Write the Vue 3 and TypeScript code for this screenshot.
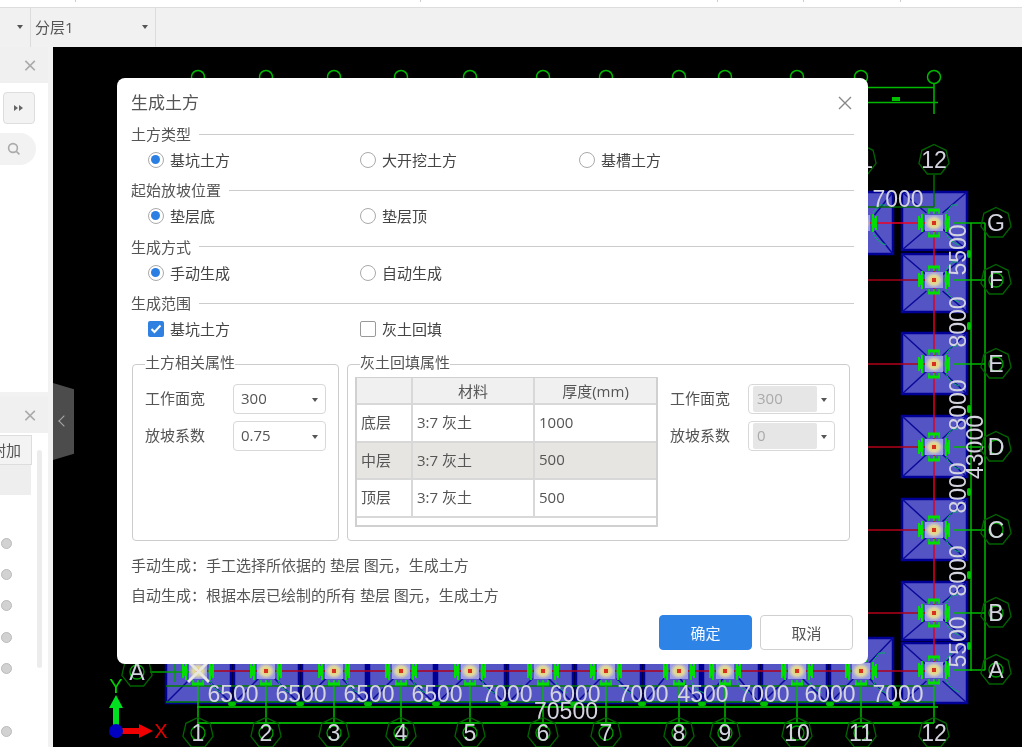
<template>
  <div class="app">
    <div class="top-strip">
      <i v-for="x in stripTicks" :key="x" class="strip-tick" :style="{ left: x + 'px' }"></i>
    </div>
    <div class="toolbar">
      <div class="tool-cell first"><i class="caret"></i></div>
      <div class="tool-cell floor"><span>分层1</span><i class="caret"></i></div>
    </div>

    <div class="main">
      <aside class="side">
        <section class="panel upper">
          <header class="panel-head"><span class="panel-x">×</span></header>
          <div class="panel-body">
            <button class="more-btn">
              <svg width="10" height="8" viewBox="0 0 10 8"><path d="M0 1l4 3-4 3zM5 1l4 3-4 3z" fill="#666" /></svg>
            </button>
            <div class="search">
              <svg width="14" height="14" viewBox="0 0 14 14" fill="none" stroke="#aaa" stroke-width="1.6"><circle cx="6" cy="6" r="4.4" /><path d="M9.4 9.4l3 3" /></svg>
            </div>
          </div>
        </section>
        <section class="panel lower">
          <header class="panel-head"><span class="panel-x">×</span></header>
          <div class="tab"><span>附加</span></div>
          <div class="lower-body">
            <div class="dots">
              <div class="gray-row"></div>
              <i v-for="(d, i) in dots" :key="i" class="dot" :style="{ marginTop: d + 'px' }"></i>
            </div>
            <div class="scroll"></div>
          </div>
        </section>
      </aside>

      <div class="canvas">
        <svg class="drawing" viewBox="53 47 969 700" width="969" height="700">
          <defs>
            <radialGradient id="core">
              <stop offset="0" stop-color="#e8d050" />
              <stop offset="0.55" stop-color="#e0d8a0" />
              <stop offset="1" stop-color="#9c9ce4" />
            </radialGradient>
            <g id="pile">
              <path d="M-15 -7v14M-12 -9v18M12 -9v18M15 -7v14" stroke="#00e000" stroke-width="2" />
              <ellipse cx="-13" cy="0" rx="2.5" ry="5" fill="#00e000" />
              <ellipse cx="13" cy="0" rx="2.5" ry="5" fill="#00e000" />
              <path d="M-6 -13h12M-6 13h12" stroke="#00e000" stroke-width="3" />
              <path d="M-5 -14v5M0 -14v5M5 -14v5M-5 9v5M0 9v5M5 9v5" stroke="#00e000" stroke-width="1.5" />
              <rect x="-9" y="-8" width="18" height="16" fill="url(#core)" />
              <rect x="-2" y="-2" width="4" height="4" fill="#d83020" />
              <path d="M12 -10l6 -8h6M12 10q4 9 13 12" fill="none" stroke="#00b060" stroke-width="1" />
            </g>
          </defs>

          <!-- 基坑 -->
          <g v-for="(b, i) in blocks" :key="'b' + i">
            <rect :x="b.x" :y="b.y" :width="b.w" :height="b.h" fill="#5454c4" stroke="#000096" stroke-width="2.5" />
            <path :d="diagonals(b)" stroke="#0a0a9a" stroke-width="1.5" fill="none" />
          </g>

          <!-- 軸線 -->
          <g stroke="#b00018" stroke-width="1.5">
            <line x1="198" y1="671" x2="934" y2="671" />
            <line x1="860" y1="223" x2="934" y2="223" stroke="#f00020" />
            <line x1="860" y1="280" x2="934" y2="280" stroke="#a00018" />
            <line x1="860" y1="364" x2="934" y2="364" />
            <line x1="860" y1="447" x2="934" y2="447" />
            <line x1="860" y1="530" x2="934" y2="530" />
            <line x1="860" y1="613" x2="934" y2="613" />
            <line x1="934" y1="223" x2="934" y2="670" stroke="#e00020" />
          </g>

          <g fill="none" stroke="#00b800" stroke-width="1.5">
            <circle v-for="x in colX" :key="'t' + x" :cx="x" cy="77" r="6.5" />
            <path d="M934 84V114M860 87.500H934M860 102.500H938" />
            <path d="M934 175V207" stroke="#007000" />
            <path d="M860 207H934" stroke="#007000" />
            <path d="M971 223V671M985 223V670" />
            <path v-for="y in rowY" :key="'r' + y" :d="`M954 ${y}H985`" />
            <path d="M166 686H934M166 702H934" stroke="#008000" />
            <path d="M197 707H938M197 723H934" stroke="#00e000" />
            <path v-for="x in colX" :key="'v' + x" :d="`M${x} 686V723`" />
            <path d="M150 672H200M175 664V682" stroke="#00a000" />
          </g>
          <rect x="892" y="97" width="8" height="4" fill="#00c000" />

          <use v-for="(p, i) in piles" :key="'p' + i" href="#pile" :x="p.x" :y="p.y" />
          <path d="M188 661L209 682M209 661L188 682" stroke="#e8e8e0" stroke-width="3" />

          <g fill="#00c000">
            <rect v-for="x in tickX" :key="'k' + x" :x="x" y="702" width="8" height="4" rx="2" />
            <rect v-for="y in [250, 322, 405, 488, 571, 642]" :key="'q' + y" x="967" :y="y" width="4" height="8" rx="2" />
          </g>

          <!-- 寸法 -->
          <g class="dim">
            <text v-for="d in bottomDims" :key="'d' + d.x" :x="d.x" y="702" text-anchor="middle">{{ d.t }}</text>
            <text x="566" y="719" text-anchor="middle">70500</text>
            <text x="898" y="207" text-anchor="middle">7000</text>
            <text v-for="d in sideDims" :key="'s' + d.y" :x="d.x" :y="d.y" text-anchor="middle" dominant-baseline="central" :transform="`rotate(-90 ${d.x} ${d.y})`">{{ d.t }}</text>
          </g>

          <!-- 軸号 -->
          <g v-for="l in labels" :key="l.t + l.x" class="dim">
            <polygon :points="hept(l.x, l.y)" fill="none" stroke="#006400" stroke-width="1.3" />
            <circle v-if="l.inner" :cx="l.x" :cy="l.y" r="7" fill="none" stroke="#00a000" stroke-width="1.3" />
            <text :x="l.x" :y="l.y + 8" text-anchor="middle">{{ l.t }}</text>
          </g>

          <!-- 座標軸 -->
          <path d="M113 731V708H109L116 695L123 708H119V731z" fill="#00e020" />
          <path d="M116 728H139V724L153 731L139 738V734H116z" fill="#f00000" />
          <circle cx="116" cy="731" r="7" fill="#0000c0" />
          <text x="116" y="693" class="axis" fill="#00d000" text-anchor="middle">Y</text>
          <text x="161" y="738" class="axis" fill="#e00000" text-anchor="middle">X</text>
        </svg>

        <div class="handle"><span></span></div>
      </div>
    </div>

    <div class="dialog">
      <div class="dialog-head">
        <span>生成土方</span>
        <svg class="close" width="14" height="14" viewBox="0 0 14 14" stroke="#888" stroke-width="1.4"><path d="M1 1l12 12M13 1L1 13" /></svg>
      </div>

      <div v-for="s in sections" :key="s.title" class="section">
        <div class="section-title"><span>{{ s.title }}</span><i></i></div>
        <div class="choices">
          <label v-for="o in s.options" :key="o.text" class="choice">
            <i :class="[s.check ? 'check' : 'radio', { on: o.on }]">
              <svg v-if="s.check && o.on" width="16" height="16" viewBox="0 0 16 16" fill="none" stroke="#fff" stroke-width="2"><path d="M3.500 8l3 3 6-6.500" /></svg>
            </i>
            <span>{{ o.text }}</span>
          </label>
        </div>
      </div>

      <div class="groups">
        <div class="group left">
          <span class="legend">土方相关属性</span>
          <div class="field"><label>工作面宽</label><div class="select"><span>300</span><i class="caret"></i></div></div>
          <div class="field"><label>放坡系数</label><div class="select"><span>0.75</span><i class="caret"></i></div></div>
        </div>
        <div class="group right">
          <span class="legend">灰土回填属性</span>
          <div class="table-wrap">
            <table>
              <thead>
                <tr><th></th><th>材料</th><th>厚度(mm)</th></tr>
              </thead>
              <tbody>
                <tr v-for="(r, i) in layers" :key="r.name" :class="{ picked: i === 1 }">
                  <td>{{ r.name }}</td><td>{{ r.material }}</td><td>{{ r.thick }}</td>
                </tr>
              </tbody>
            </table>
          </div>
          <div class="right-fields">
            <div class="field"><label>工作面宽</label><div class="select off"><span>300</span><i class="caret"></i></div></div>
            <div class="field"><label>放坡系数</label><div class="select off"><span>0</span><i class="caret"></i></div></div>
          </div>
        </div>
      </div>

      <p class="notes">手动生成：手工选择所依据的 垫层 图元，生成土方</p>
      <p class="notes">自动生成：根据本层已绘制的所有 垫层 图元，生成土方</p>

      <div class="actions">
        <button class="btn primary">确定</button>
        <button class="btn">取消</button>
      </div>
    </div>
  </div>
</template>

<script setup lang="ts">
interface Block { x: number; y: number; w: number; h: number }

const stripTicks = [75, 420, 717, 803, 900];
const colX = [198, 266, 334, 401, 470, 543, 606, 679, 725, 797, 861, 934];
const rowY = [223, 280, 364, 447, 530, 613, 670];

const dots = [73, 20, 20, 21, 20, 52];

// 下段の基坑は軸の中間で区切る
const bottomEdges = [166, 234, 302, 369, 437, 508, 576, 644, 703, 762, 830, 896];
const blocks: Block[] = [
  { x: 902, y: 192, w: 65, h: 58 },
  { x: 902, y: 254, w: 65, h: 58 },
  { x: 902, y: 333, w: 65, h: 61 },
  { x: 902, y: 416, w: 65, h: 61 },
  { x: 902, y: 499, w: 65, h: 61 },
  { x: 902, y: 582, w: 65, h: 58 },
  { x: 902, y: 643, w: 65, h: 60 },
  { x: 840, y: 192, w: 53, h: 62 },
  ...bottomEdges.slice(0, -1).map((x, i) => ({
    x,
    y: 638,
    w: bottomEdges[i + 1] - x - 3,
    h: 65,
  })),
];

const piles = [
  ...rowY.map((y) => ({ x: 934, y })),
  ...colX.slice(0, -1).map((x) => ({ x, y: 671 })),
  { x: 861, y: 223 },
];

const tickX = [228, 296, 364, 432, 500, 570, 638, 698, 760, 826, 892];

const bottomDims = [
  { x: 233, t: "6500" },
  { x: 301, t: "6500" },
  { x: 369, t: "6500" },
  { x: 437, t: "6500" },
  { x: 507, t: "7000" },
  { x: 575, t: "6000" },
  { x: 643, t: "7000" },
  { x: 703, t: "4500" },
  { x: 764, t: "7000" },
  { x: 830, t: "6000" },
  { x: 898, t: "7000" },
];

const sideDims = [
  { x: 958, y: 250, t: "5500" },
  { x: 958, y: 322, t: "8000" },
  { x: 958, y: 405, t: "8000" },
  { x: 958, y: 488, t: "8000" },
  { x: 958, y: 571, t: "8000" },
  { x: 958, y: 642, t: "5500" },
  { x: 975, y: 447, t: "43000" },
];

const labels = [
  ...colX.map((x, i) => ({ x, y: 733, t: String(i + 1), inner: i < 11 })),
  { x: 934, y: 160, t: "12", inner: false },
  { x: 861, y: 160, t: "11", inner: false },
  { x: 996, y: 223, t: "G", inner: false },
  { x: 996, y: 280, t: "F", inner: true },
  { x: 996, y: 364, t: "E", inner: true },
  { x: 996, y: 447, t: "D", inner: true },
  { x: 996, y: 530, t: "C", inner: true },
  { x: 996, y: 613, t: "B", inner: true },
  { x: 996, y: 670, t: "A", inner: true },
  { x: 137, y: 672, t: "A", inner: true },
];

const sections = [
  {
    title: "土方类型",
    options: [
      { text: "基坑土方", on: true },
      { text: "大开挖土方", on: false },
      { text: "基槽土方", on: false },
    ],
  },
  {
    title: "起始放坡位置",
    options: [
      { text: "垫层底", on: true },
      { text: "垫层顶", on: false },
    ],
  },
  {
    title: "生成方式",
    options: [
      { text: "手动生成", on: true },
      { text: "自动生成", on: false },
    ],
  },
  {
    title: "生成范围",
    check: true,
    options: [
      { text: "基坑土方", on: true },
      { text: "灰土回填", on: false },
    ],
  },
];

const layers = [
  { name: "底层", material: "3:7 灰土", thick: "1000" },
  { name: "中层", material: "3:7 灰土", thick: "500" },
  { name: "顶层", material: "3:7 灰土", thick: "500" },
];

// 軸号の七角形
const hept = (cx: number, cy: number) =>
  Array.from({ length: 7 }, (_, i) => {
    const a = -Math.PI / 2 + (i * 2 * Math.PI) / 7;
    return `${(cx + 15.5 * Math.cos(a)).toFixed(1)},${(cy + 15.5 * Math.sin(a)).toFixed(1)}`;
  }).join(" ");

const diagonals = (b: Block) => {
  const r = b.x + b.w;
  const d = b.y + b.h;
  const cx = b.x + b.w / 2;
  const cy = b.y + b.h / 2;
  return `M${b.x} ${b.y}L${cx - 8} ${cy - 8}M${r} ${b.y}L${cx + 8} ${cy - 8}M${b.x} ${d}L${cx - 8} ${cy + 8}M${r} ${d}L${cx + 8} ${cy + 8}`;
};
</script>

<style scoped>
.app {
  position: relative;
  width: 1022px;
  height: 747px;
  overflow: hidden;
  display: flex;
  flex-direction: column;
  background: #fff;
  color: #555;
  font-family: "Open Sans", "Noto Sans CJK SC", sans-serif;
  font-size: 15px;
  /* 元画像が拡大でぼけている分 */
  filter: blur(0.4px);
}

.top-strip {
  position: relative;
  height: 7px;
  background: #fff;
  border-bottom: 1px solid #ddd;
}

.strip-tick {
  position: absolute;
  top: 0;
  width: 1px;
  height: 2px;
  background: #ccc;
}

.toolbar {
  height: 39px;
  display: flex;
  background: #f1f1f1;
}

.tool-cell {
  display: flex;
  align-items: center;
  justify-content: space-between;
  border-right: 1px solid #dcdcdc;
  padding-bottom: 2px;
}

.tool-cell.first {
  width: 31px;
  justify-content: flex-end;
  padding-right: 7px;
  box-sizing: border-box;
}

.tool-cell.floor {
  width: 125px;
  padding: 0 7px 2px 4px;
  box-sizing: border-box;
}

.caret {
  display: block;
  width: 0;
  height: 0;
  border: 3px solid transparent;
  border-top: 4px solid #555;
  border-bottom: 0;
}

.main {
  flex: 1;
  display: flex;
  min-height: 0;
}

.side {
  width: 53px;
  box-sizing: border-box;
  flex: none;
  background: #f2f2f2;
  padding-right: 5px;
  display: flex;
  flex-direction: column;
  gap: 5px;
}

.panel {
  background: #fff;
  overflow: hidden;
}

.panel.upper {
  height: 345px;
}

.panel.lower {
  flex: 1;
}

.panel-head {
  height: 36px;
  background: #f0f0f0;
  display: flex;
  align-items: center;
  justify-content: flex-end;
  padding-right: 11px;
}

.panel-x {
  font-size: 24px;
  line-height: 1;
  color: #aaa;
}

.panel-body {
  padding: 9px 0 0 3px;
}

.more-btn {
  display: flex;
  align-items: center;
  justify-content: center;
  width: 32px;
  height: 32px;
  padding: 0;
  background: #f3f3f3;
  border: 1px solid #ddd;
  border-radius: 4px;
}

.search {
  width: 36px;
  height: 32px;
  margin: 9px 0 0 -3px;
  background: #f2f2f2;
  border-radius: 0 16px 16px 0;
  display: flex;
  align-items: center;
  justify-content: flex-end;
  padding-right: 15px;
  box-sizing: border-box;
}

.tab {
  width: 32px;
  height: 30px;
  margin-top: 2px;
  display: flex;
  justify-content: flex-end;
  overflow: hidden;
  background: #f3f3f3;
  border: 1px solid #ddd;
  border-left: 0;
  box-sizing: border-box;
  line-height: 28px;
  white-space: nowrap;
  padding-right: 10px;
}

.tab span {
  flex: none;
}

.lower-body {
  display: flex;
  align-items: flex-start;
}

.dots {
  width: 37px;
  flex: none;
  display: flex;
  flex-direction: column;
}

.gray-row {
  width: 31px;
  height: 30px;
  margin-bottom: -30px;
  background: #eeeeee;
}

.dot {
  display: block;
  width: 11px;
  height: 11px;
  margin-left: 1px;
  border-radius: 50%;
  background: #d2d2d2;
  border: 1px solid #bbb;
  box-sizing: border-box;
}

.scroll {
  width: 5px;
  height: 218px;
  margin-top: -15px;
  background: #ececec;
  border-radius: 3px;
}

.canvas {
  position: relative;
  flex: 1;
  background: #000;
  overflow: hidden;
}

.drawing {
  display: block;
}

.dim text {
  font-family: "Liberation Sans", sans-serif;
  font-size: 23px;
  fill: #d4d4e0;
}

.axis {
  font-family: "Liberation Sans", sans-serif;
  font-size: 20px;
}

.handle {
  position: absolute;
  left: 0;
  top: 336px;
  width: 21px;
  height: 77px;
  background: #4c4c4c;
  clip-path: polygon(0 0, 100% 8%, 100% 92%, 0 100%);
}

.handle span {
  position: absolute;
  left: 7px;
  top: 34px;
  width: 7px;
  height: 7px;
  border-left: 1.5px solid #aaa;
  border-bottom: 1.5px solid #aaa;
  transform: rotate(45deg);
}

.dialog {
  position: absolute;
  left: 117px;
  top: 78px;
  width: 751px;
  height: 586px;
  box-sizing: border-box;
  padding: 13px 14px 0;
  background: #fff;
  border-radius: 8px;
}

.dialog-head {
  height: 24px;
  margin-bottom: 9px;
  font-size: 17px;
  line-height: 24px;
  display: flex;
  justify-content: space-between;
  align-items: center;
  padding-right: 1px;
}

.close {
  margin-right: 1px;
}

.section {
  margin-bottom: 10.4px;
}

.section-title {
  display: flex;
  align-items: center;
  gap: 8px;
  height: 20px;
  line-height: 20px;
}

.section-title i {
  flex: 1;
  height: 1px;
  background: #ccc;
}

.choices {
  display: grid;
  grid-template-columns: 212px 219px auto;
  margin: 6px 0 0 17px;
  height: 20px;
  line-height: 20px;
}

.choice {
  display: flex;
  align-items: center;
  gap: 6px;
  color: #444;
}

.radio {
  width: 16px;
  height: 16px;
  box-sizing: border-box;
  border: 1.5px solid #aaa;
  border-radius: 50%;
  background: #fff;
  position: relative;
}

.radio.on::after {
  content: "";
  position: absolute;
  left: 2px;
  top: 2px;
  width: 9px;
  height: 9px;
  border-radius: 50%;
  background: #2b7fe3;
}

.check {
  width: 16px;
  height: 16px;
  box-sizing: border-box;
  border: 1px solid #999;
  border-radius: 2px;
  background: #fff;
  display: block;
}

.check.on {
  background: #2f80e0;
  border: 0;
}

.check svg {
  display: block;
}

.groups {
  display: flex;
  gap: 8px;
  margin: 25px 4px 0 1px;
  height: 177px;
}

.group {
  position: relative;
  box-sizing: border-box;
  border: 1px solid #ccc;
  border-radius: 4px;
}

.group.left {
  width: 207px;
  padding: 19px 12px 0;
}

.group.right {
  flex: 1;
  display: flex;
  gap: 12px;
  padding: 12px 0 0 7px;
}

.legend {
  position: absolute;
  top: -13px;
  left: 12px;
  line-height: 20px;
  background: #fff;
}

.field {
  display: flex;
  align-items: center;
  height: 30px;
  margin-bottom: 7px;
}

.field label {
  flex: none;
  width: 88px;
  position: relative;
  top: -2px;
}

.right-fields {
  padding-top: 7px;
}

.right-fields .field label {
  width: 78px;
}

.select {
  position: relative;
  width: 93px;
  height: 30px;
  box-sizing: border-box;
  border: 1px solid #d8d8d8;
  border-radius: 4px;
  padding-left: 7px;
  line-height: 26px;
  color: #555;
}

.select .caret {
  position: absolute;
  right: 7px;
  top: 13px;
}

.select.off {
  width: 87px;
  color: #aaa;
  padding-left: 0;
}

.select.off span {
  display: block;
  width: 64px;
  height: 26px;
  margin: 1px 0 0 4px;
  padding-left: 4px;
  box-sizing: border-box;
  background: #e6e6e6;
  line-height: 25px;
  border-radius: 2px;
}

.table-wrap {
  width: 303px;
  height: 150px;
  flex: none;
  box-sizing: border-box;
  border: 2px solid #d0d0d0;
  border-top-width: 1px;
}

table {
  width: 100%;
  table-layout: fixed;
  border-collapse: collapse;
}

th,
td {
  padding: 0 0 0 4px;
  border: 1px solid #d8d8d8;
  border-width: 0 2px 2px 0;
  font-weight: 400;
  text-align: left;
}

th:first-child,
td:first-child {
  width: 54px;
}

th:nth-child(2),
td:nth-child(2) {
  width: 120px;
}

th:last-child,
td:last-child {
  border-right: 0;
}

th {
  height: 25px;
  text-align: center;
  background: #f0f0f0;
  padding: 0;
}

td {
  height: 37.500px;
  padding-bottom: 2px;
  box-sizing: border-box;
  background: #fff;
}

tr.picked td {
  background: #e6e5e2;
}

.notes {
  margin: 0;
  height: 30px;
  line-height: 28px;
}

.groups + .notes {
  margin-top: 10px;
}

.actions {
  display: flex;
  justify-content: flex-end;
  gap: 8px;
  margin: 4px 1px 0 0;
}

.btn {
  width: 93px;
  height: 35px;
  padding: 0;
  border: 1px solid #d0d0d0;
  border-radius: 4px;
  background: #fff;
  color: #555;
  font: inherit;
}

.btn.primary {
  background: #2e83e6;
  border-color: #2e83e6;
  color: #f4f8ff;
}
</style>

<style>
html,
body {
  margin: 0;
  background: #fff;
}
</style>
